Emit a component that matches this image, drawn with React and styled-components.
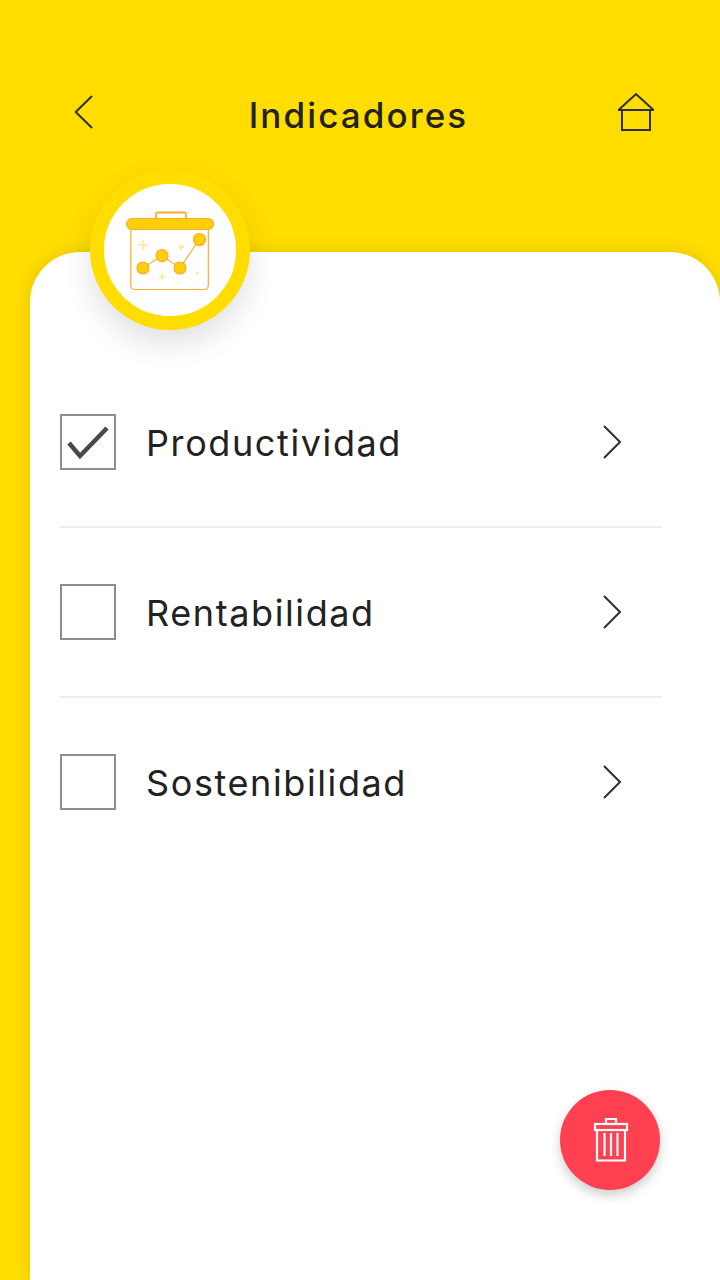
import React from "react";
import styled, { createGlobalStyle } from "styled-components";

const Global = createGlobalStyle`
  html, body { margin: 0; padding: 0; background: #ffdd00; }
  body { font-family: "Inter", "Open Sans", "Liberation Sans", sans-serif; }
`;

const Page = styled.div`
  width: 720px;
  height: 1280px;
  overflow: hidden;
  background: #ffdd00;
  display: flex;
  flex-direction: column;
`;

const Header = styled.header`
  height: 252px;
  flex: none;
  box-sizing: border-box;
  padding: 92px 64px 0;
  display: flex;
  justify-content: space-between;
  align-items: flex-start;
`;

const IconSlot = styled.svg`
  width: 40px;
  height: 40px;
  display: block;
  fill: none;
  stroke: #2e2e2e;
  stroke-width: 2;
`;

const Title = styled.h1`
  margin: 0 3px 0 0;
  font-size: 35px;
  line-height: 46px;
  font-weight: 500;
  letter-spacing: 2.1px;
  color: #222;
`;

const Card = styled.main`
  position: relative;
  flex: 1;
  margin-left: 30px;
  padding: 106px 58px 0 30px;
  background: #fff;
  border-radius: 50px 50px 0 0;
  box-shadow: 0 0 16px rgba(0, 0, 0, 0.12);
`;

const Badge = styled.div`
  position: absolute;
  left: 60px;
  top: -82px;
  width: 160px;
  height: 160px;
  box-sizing: border-box;
  border: 14px solid #ffdd00;
  border-radius: 50%;
  background: #fff;
  box-shadow: 0 14px 30px rgba(0, 0, 0, 0.12);
`;

const BadgeArt = styled.svg`
  position: absolute;
  left: -14px;
  top: -14px;
  width: 160px;
  height: 160px;
`;

const List = styled.ul`
  list-style: none;
  margin: 0;
  padding: 0;
`;

const Row = styled.li`
  height: 170px;
  box-sizing: border-box;
  display: flex;
  align-items: center;
  gap: 30px;
  padding-right: 30px;
  border-bottom: 2px solid ${(p) => (p.$last ? "transparent" : "#ececec")};
`;

const Box = styled.span`
  width: 56px;
  height: 56px;
  flex: none;
  box-sizing: border-box;
  border: 2px solid #8e8e8e;
  display: block;
  position: relative;
`;

const Check = styled.svg`
  position: absolute;
  left: -2px;
  top: -2px;
  width: 56px;
  height: 56px;
  fill: none;
  stroke: #484848;
  stroke-width: 4.5;
`;

const Label = styled.span`
  flex: 1;
  padding-top: 2px;
  font-size: 36px;
  line-height: 50px;
  font-weight: 400;
  letter-spacing: 1.6px;
  color: #222;
`;

const Chevron = styled.svg`
  width: 40px;
  height: 40px;
  flex: none;
  fill: none;
  stroke: #2e2e2e;
  stroke-width: 2;
`;

const Fab = styled.button`
  position: absolute;
  right: 60px;
  bottom: 90px;
  width: 100px;
  height: 100px;
  padding: 0;
  border: 0;
  border-radius: 50%;
  background: #ff4050;
  box-shadow: 0 5px 12px rgba(0, 0, 0, 0.2);
  display: flex;
  align-items: center;
  justify-content: center;
`;

const TrashIcon = styled.svg`
  width: 100px;
  height: 100px;
  fill: none;
  stroke: #fff;
  stroke-width: 2.2;
`;

const items = [
  { name: "Productividad", checked: true },
  { name: "Rentabilidad", checked: false },
  { name: "Sostenibilidad", checked: false },
];

const Plus = ({ x, y, r }) => (
  <path
    d={`M${x - r} ${y}H${x + r}M${x} ${y - r}V${y + r}`}
    stroke="#ffe98a"
    strokeWidth="1.4"
    fill="none"
  />
);

export default function App() {
  return (
    <Page>
      <Global />
      <Header>
        <IconSlot viewBox="0 0 40 40">
          <path d="M28 4 L11.7 20 L28 36" />
        </IconSlot>
        <Title>Indicadores</Title>
        <IconSlot viewBox="0 0 40 40">
          <path d="M2 18 H38 M2.5 18 L20 2 L37.5 18" />
          <path d="M6 18 V38 H34 V18" />
        </IconSlot>
      </Header>
      <Card>
        <Badge>
          <BadgeArt viewBox="0 0 160 160">
            <g stroke="#ffab2e" strokeWidth="1.2">
              <rect x="66" y="42.5" width="30" height="8" rx="1.5" fill="#fff" strokeWidth="1.8" />
              <rect x="40.8" y="56" width="77.5" height="63.5" rx="4" fill="#fff" />
              <rect x="36.6" y="48.5" width="87" height="11" rx="5.5" fill="#ffcf0a" />
              <path d="M53 98 L72 85.6 L90 98 L109.5 69" fill="none" />
              <circle cx="53" cy="98" r="6" fill="#ffcf0a" />
              <circle cx="72" cy="85.6" r="6" fill="#ffcf0a" />
              <circle cx="90" cy="98" r="6" fill="#ffcf0a" />
              <circle cx="109.5" cy="69.5" r="6" fill="#ffcf0a" />
            </g>
            <Plus x={53} y={75} r={5} />
            <Plus x={91} y={77} r={3} />
            <Plus x={72} y={106.7} r={3} />
            <Plus x={107} y={103} r={1.5} />
          </BadgeArt>
        </Badge>
        <List>
          {items.map((item, i) => (
            <Row key={item.name} $last={i === items.length - 1}>
              <Box>
                {item.checked && (
                  <Check viewBox="0 0 56 56">
                    <path d="M9 29 L20 42 L47 14" />
                  </Check>
                )}
              </Box>
              <Label>{item.name}</Label>
              <Chevron viewBox="0 0 40 40">
                <path d="M12 4 L28 20 L12 36" />
              </Chevron>
            </Row>
          ))}
        </List>
        <Fab aria-label="Eliminar">
          <TrashIcon viewBox="0 0 100 100">
            <path d="M46 33 V29 H56 V33" />
            <rect x="35" y="34" width="32" height="6" />
            <path d="M37 40 V70.5 H65 V40" />
            <path d="M44.5 43 V66 M51 43 V66 M57.5 43 V66" />
          </TrashIcon>
        </Fab>
      </Card>
    </Page>
  );
}
